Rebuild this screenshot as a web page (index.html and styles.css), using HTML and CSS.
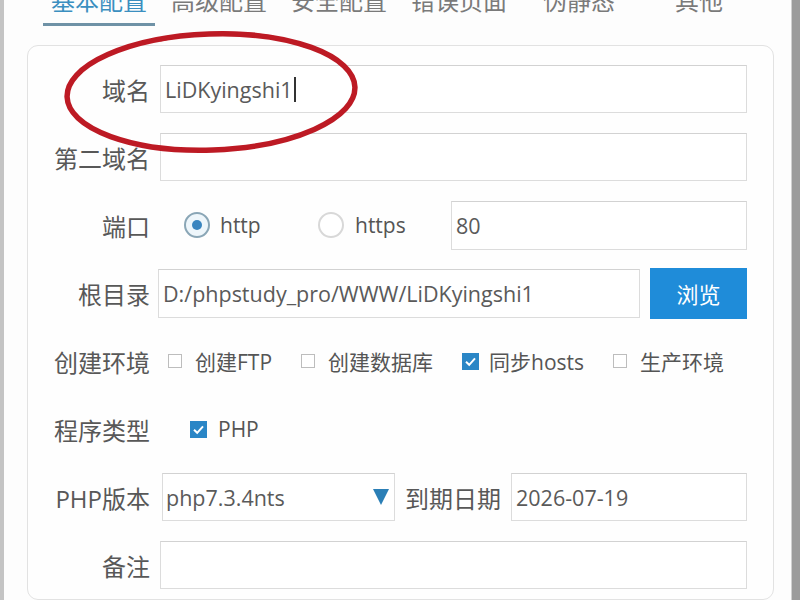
FILE: index.html
```html
<!DOCTYPE html>
<html lang="zh-CN">
<head>
<meta charset="utf-8">
<title>站点配置</title>
<link rel="stylesheet" href="styles.css">
</head>
<body>
<div class="edge-left"></div>
<div class="main">
  <div class="tabs">
    <div class="tab active">基本配置</div>
    <div class="tab">高级配置</div>
    <div class="tab">安全配置</div>
    <div class="tab">错误页面</div>
    <div class="tab">伪静态</div>
    <div class="tab">其他</div>
  </div>
  <div class="card">
    <div class="row">
      <div class="lbl">域名</div>
      <div class="field"><span class="val">LiDKyingshi1</span><span class="caret"></span></div>
    </div>
    <div class="row">
      <div class="lbl">第二域名</div>
      <div class="field"></div>
    </div>
    <div class="row">
      <div class="lbl">端口</div>
      <div class="ctl port-ctl">
        <span class="radio on"></span><span class="opt http">http</span>
        <span class="radio"></span><span class="opt https">https</span>
        <div class="field port"><span class="val">80</span></div>
      </div>
    </div>
    <div class="row">
      <div class="lbl">根目录</div>
      <div class="ctl root-ctl">
        <div class="field root"><span class="val">D:/phpstudy_pro/WWW/LiDKyingshi1</span></div>
        <div class="btn">浏览</div>
      </div>
    </div>
    <div class="row">
      <div class="lbl">创建环境</div>
      <div class="ctl env-ctl">
        <span class="cb"></span><span class="opt">创建FTP</span>
        <span class="cb"></span><span class="opt">创建数据库</span>
        <span class="cb on"><svg viewBox="0 0 17 17" width="17" height="17"><path d="M4 8.8 L7.2 11.8 L13 5.4" fill="none" stroke="#fff" stroke-width="2"/></svg></span><span class="opt">同步hosts</span>
        <span class="cb"></span><span class="opt">生产环境</span>
      </div>
    </div>
    <div class="row">
      <div class="lbl">程序类型</div>
      <div class="ctl type-ctl">
        <span class="cb on"><svg viewBox="0 0 17 17" width="17" height="17"><path d="M4 8.8 L7.2 11.8 L13 5.4" fill="none" stroke="#fff" stroke-width="2"/></svg></span><span class="opt">PHP</span>
      </div>
    </div>
    <div class="row">
      <div class="lbl">PHP版本</div>
      <div class="ctl ver-ctl">
        <div class="field select"><span class="val">php7.3.4nts</span><svg class="arrow" viewBox="0 0 16 18" width="16" height="18"><path d="M0 1 L16 1 L8 17 Z" fill="#2b7fb6"/></svg></div>
        <div class="lbl2">到期日期</div>
        <div class="field date"><span class="val">2026-07-19</span></div>
      </div>
    </div>
    <div class="row">
      <div class="lbl">备注</div>
      <div class="field"></div>
    </div>
  </div>
</div>
<div class="edge-right"></div>
<svg class="annot" viewBox="0 0 800 600" width="800" height="600">
  <ellipse cx="211" cy="92" rx="144" ry="58" transform="rotate(-2 211 92)" fill="none" stroke="#bd1a24" stroke-width="5.5"/>
  <path d="M160 40 C 205 30, 262 30, 305 46" fill="none" stroke="#bd1a24" stroke-width="3"/>
</svg>
</body>
</html>
```
FILE: styles.css
```css
html, body {
  margin: 0;
  padding: 0;
}
body {
  width: 800px;
  height: 600px;
  overflow: hidden;
  display: flex;
  background: #fdfdfd;
  font-family: "Open Sans", "Noto Sans CJK SC", sans-serif;
  color: #555;
  position: relative;
}
.edge-left {
  width: 4px;
  flex: none;
  background: #c4c4c4;
}
.edge-right {
  width: 8px;
  flex: none;
  background: #9c9c9c;
  border-left: 1px solid #d0d0d0;
}
.main {
  flex: 1;
  display: flex;
  flex-direction: column;
}
.tabs {
  display: flex;
  margin-top: -12px;
  padding-left: 35px;
}
.tab {
  width: 120px;
  text-align: center;
  font-family: "Noto Sans CJK SC", sans-serif;
  font-size: 24px;
  line-height: 24px;
  padding-bottom: 11px;
  border-bottom: 3px solid transparent;
  color: #7a7a7a;
}
.tab.active {
  color: #3b8fc0;
  border-bottom-color: #6f92a6;
  width: 112px;
  margin-left: 4px;
  margin-right: 4px;
}
.card {
  margin: 19px 17px 0 23px;
  border: 1.5px solid #e2e2e2;
  border-radius: 11px;
  background: #fefefe;
  padding: 19px 26px 10px 0;
  display: flex;
  flex-direction: column;
  gap: 20px;
}
.row {
  display: grid;
  grid-template-columns: 122px 1fr;
  column-gap: 10px;
  height: 48px;
  align-items: center;
}
.lbl, .lbl2 {
  text-align: right;
  font-size: 24px;
  color: #585858;
  white-space: nowrap;
}
.field {
  height: 48px;
  box-sizing: border-box;
  border: 1.5px solid #dcdcdc;
  border-top-color: #d2d2d2;
  background: #fff;
  display: flex;
  align-items: center;
  padding-left: 4px;
  font-size: 21.5px;
  color: #5a5a5a;
}
.caret {
  width: 2px;
  height: 25px;
  background: #333;
  margin-left: 1px;
}
.ctl {
  display: flex;
  align-items: center;
  height: 48px;
}
.opt {
  font-size: 21px;
  color: #555;
  white-space: nowrap;
}
.radio {
  width: 26px;
  height: 26px;
  box-sizing: border-box;
  border-radius: 50%;
  border: 2px solid #d8d8d8;
  background: #fff;
  flex: none;
  position: relative;
}
.radio.on {
  border-color: #8aa6b6;
  background: #eef6fb;
}
.radio.on::after {
  content: "";
  position: absolute;
  left: 6px;
  top: 6px;
  width: 10px;
  height: 10px;
  border-radius: 50%;
  background: #3a85bf;
}
.port-ctl .radio:first-child {
  margin-left: 24px;
}
.port-ctl .http {
  margin-left: 10px;
  width: 41px;
}
.port-ctl .radio:nth-child(3) {
  margin-left: 57px;
}
.port-ctl .https {
  margin-left: 11px;
  width: 50px;
}
.field.port {
  margin-left: 46px;
  flex: 1;
  height: 49px;
}
.root-ctl .field.root {
  margin-left: -2px;
  width: 482px;
  height: 49px;
}
.btn {
  margin-left: 10px;
  flex: 1;
  height: 51px;
  background: #1f8cd9;
  color: #fff;
  font-size: 22px;
  display: flex;
  align-items: center;
  justify-content: center;
}
.cb {
  width: 14px;
  height: 14px;
  box-sizing: border-box;
  border: 1.5px solid #bdbdbd;
  background: #fff;
  flex: none;
}
.cb.on {
  width: 17px;
  height: 17px;
  border: none;
  background: #2a86c6;
  display: flex;
}
.env-ctl .cb {
  margin-left: 29px;
}
.env-ctl .cb:first-child {
  margin-left: 8px;
}
.env-ctl .opt {
  margin-left: 13px;
}
.env-ctl .cb.on + .opt {
  margin-left: 10px;
}
.type-ctl .cb {
  margin-left: 30px;
}
.type-ctl .opt {
  margin-left: 11px;
}
.ver-ctl .field.select {
  margin-left: 2px;
  width: 233px;
  position: relative;
  padding-left: 3px;
}
.arrow {
  margin-left: auto;
  margin-right: 5px;
}
.lbl2 {
  margin-left: 10px;
}
.field.date {
  margin-left: 10px;
  flex: 1;
}
.annot {
  position: absolute;
  left: 0;
  top: 0;
  pointer-events: none;
}
```
